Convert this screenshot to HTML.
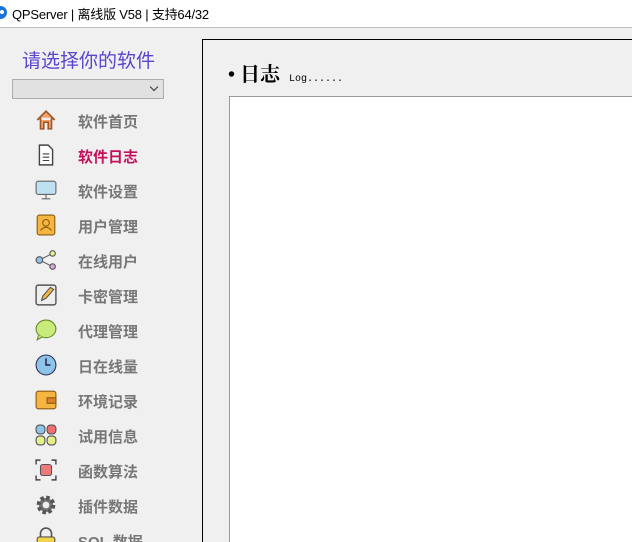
<html style="overflow:hidden;width:632px;height:542px"><head><style>
body{margin:0;width:632px;height:542px;overflow:hidden;background:#f0f0f0;font-family:"Liberation Sans","Noto Sans CJK SC",sans-serif;position:relative}
.tb{position:absolute;left:0;top:0;width:632px;height:27px;background:#fff;border-bottom:1px solid #bbb}
.tb span{position:absolute;left:12px;top:4px;font-size:13px;color:#000;letter-spacing:-0.2px}
.logo{position:absolute;left:-6px;top:6px;width:13px;height:13px;border-radius:50%;background:#1a73d9}
.logo:after{content:"";position:absolute;left:6px;top:4px;width:4px;height:4px;border-radius:50%;background:#fff}
.h{position:absolute;left:22px;top:46px;font-size:19px;color:#5a44cc}
.sel{position:absolute;left:12px;top:79px;width:150px;height:18px;border:1px solid #adadad;background:#e1e1e1}
.sel:after{content:"";position:absolute;right:6px;top:4px;width:5px;height:5px;border-right:1px solid #333;border-bottom:1px solid #333;transform:rotate(45deg)}
.it{position:absolute;left:78px;font-size:15px;font-weight:bold;color:#777;line-height:20px}
.ic{position:absolute;left:35px;width:22px;height:22px;margin-top:1px}
.panel{position:absolute;left:202px;top:39px;width:440px;height:520px;border:1px solid #000}
.box{position:absolute;left:229px;top:96px;width:420px;height:460px;border:1px solid #999;background:#fff}
.t{position:absolute;left:228px;top:58px;font-family:"Liberation Serif","Noto Serif CJK SC",serif;font-size:20px;font-weight:bold;color:#000}
.t small{font-family:"Liberation Mono",monospace;font-size:10px;font-weight:normal;margin-left:4px}
</style></head><body>
<div class="tb"><div class="logo"></div><span>QPServer | 离线版 V58 | 支持64/32</span></div>
<div class="h">请选择你的软件</div>
<div class="sel"></div>
<div class="panel"></div>
<div class="t">• 日志 <small>Log......</small></div>
<div class="box"></div>

<svg class="ic" style="top:108px" viewBox="0 0 20 20"><path d="M2 10 L10 2 L18 10 M5 8 V18 H8 V12 H12 V18 H15 V8" fill="#f4a36a" stroke="#a05a2a" stroke-width="1.5"/></svg>
<div class="it" style="top:113px">软件首页</div>
<svg class="ic" style="top:143px" viewBox="0 0 20 20"><path d="M4 1 H12 L16 5 V19 H4 Z" fill="#fff" stroke="#444" stroke-width="1.3"/><path d="M7 9H13M7 12H13M7 15H13" stroke="#444"/></svg>
<div class="it" style="top:148px;color:#c2105a">软件日志</div>
<svg class="ic" style="top:178px" viewBox="0 0 20 20"><rect x="1" y="2" width="18" height="12" rx="2" fill="#bfe0f0" stroke="#666"/><path d="M10 14V18M6 18H14" stroke="#666"/></svg>
<div class="it" style="top:183px">软件设置</div>
<svg class="ic" style="top:213px" viewBox="0 0 20 20"><rect x="2" y="1" width="16" height="18" rx="2" fill="#f6b541" stroke="#8a5a10"/><circle cx="10" cy="8" r="3" fill="none" stroke="#8a5a10"/><path d="M5 15 Q10 9 15 15" fill="none" stroke="#8a5a10"/></svg>
<div class="it" style="top:218px">用户管理</div>
<svg class="ic" style="top:248px" viewBox="0 0 20 20"><path d="M4 10 L16 4 M4 10 L16 16" stroke="#666"/><circle cx="4" cy="10" r="3" fill="#8ec3ea" stroke="#555"/><circle cx="16" cy="4" r="2.5" fill="#e6f08a" stroke="#555"/><circle cx="16" cy="16" r="2.5" fill="#d7a8e0" stroke="#555"/></svg>
<div class="it" style="top:253px">在线用户</div>
<svg class="ic" style="top:283px" viewBox="0 0 20 20"><rect x="1" y="1" width="18" height="18" rx="2" fill="#eee" stroke="#555" stroke-width="1.3"/><path d="M6 15 L7 11 L14 3 L17 5 L10 13 Z" fill="#f6b541" stroke="#555"/></svg>
<div class="it" style="top:288px">卡密管理</div>
<svg class="ic" style="top:318px" viewBox="0 0 20 20"><ellipse cx="10" cy="9" rx="9" ry="8" fill="#c8eb7a" stroke="#6a8a30"/><path d="M3 15 L2 19 L7 16" fill="#c8eb7a" stroke="#6a8a30"/></svg>
<div class="it" style="top:323px">代理管理</div>
<svg class="ic" style="top:353px" viewBox="0 0 20 20"><circle cx="10" cy="10" r="9" fill="#8ec3ea" stroke="#335"/><path d="M10 4V10H14" stroke="#224" fill="none" stroke-width="1.3"/></svg>
<div class="it" style="top:358px">日在线量</div>
<svg class="ic" style="top:388px" viewBox="0 0 20 20"><rect x="1" y="2" width="18" height="16" rx="2" fill="#f6b541" stroke="#8a5a10"/><rect x="11" y="8" width="8" height="5" fill="#d9822b" stroke="#8a5a10"/></svg>
<div class="it" style="top:393px">环境记录</div>
<svg class="ic" style="top:423px" viewBox="0 0 20 20"><rect x="1" y="1" width="8" height="8" rx="3" fill="#8ec3ea" stroke="#555"/><rect x="11" y="1" width="8" height="8" rx="3" fill="#f07070" stroke="#555"/><rect x="1" y="11" width="8" height="8" rx="3" fill="#e6f08a" stroke="#555"/><rect x="11" y="11" width="8" height="8" rx="3" fill="#e6f08a" stroke="#555"/></svg>
<div class="it" style="top:428px">试用信息</div>
<svg class="ic" style="top:458px" viewBox="0 0 20 20"><path d="M1 5V1H5M15 1H19V5M19 15V19H15M5 19H1V15" fill="none" stroke="#444" stroke-width="1.3"/><rect x="5" y="5" width="10" height="10" rx="2" fill="#f07a7a" stroke="#555"/></svg>
<div class="it" style="top:463px">函数算法</div>
<svg class="ic" style="top:493px" viewBox="0 0 20 20"><circle cx="10" cy="10" r="6.5" fill="#777" stroke="#555" stroke-width="4" stroke-dasharray="3 2.1"/><circle cx="10" cy="10" r="3" fill="#f0f0f0"/></svg>
<div class="it" style="top:498px">插件数据</div>
<svg class="ic" style="top:526px" viewBox="0 0 20 20"><path d="M5 9V6A5 5 0 0 1 15 6V9" fill="none" stroke="#555" stroke-width="1.5"/><rect x="2" y="9" width="16" height="11" rx="2" fill="#f3d34a" stroke="#555"/></svg>
<div class="it" style="top:533px">SQL 数据</div>
</body></html>
